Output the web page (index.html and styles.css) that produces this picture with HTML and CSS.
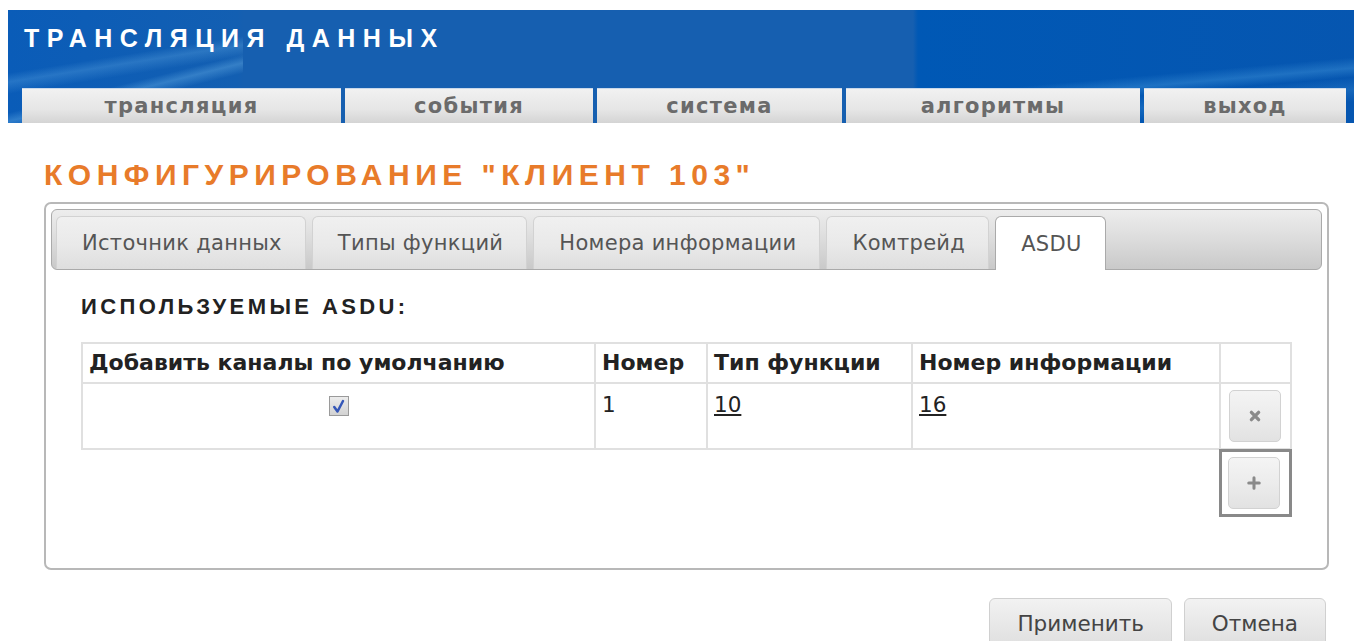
FILE: index.html
```html
<!DOCTYPE html>
<html lang="ru">
<head>
<meta charset="utf-8">
<title>Трансляция данных</title>
<link rel="stylesheet" href="styles.css">
</head>
<body>
<header class="top">
  <h1 class="brand">ТРАНСЛЯЦИЯ ДАННЫХ</h1>
  <nav class="menu">
    <a class="menu-item" href="#">трансляция</a>
    <a class="menu-item" href="#">события</a>
    <a class="menu-item" href="#">система</a>
    <a class="menu-item" href="#">алгоритмы</a>
    <a class="menu-item" href="#">выход</a>
  </nav>
</header>

<main class="page">
  <h2 class="page-title">КОНФИГУРИРОВАНИЕ "КЛИЕНТ 103"</h2>

  <section class="panel">
    <div class="tabs">
      <a class="tab" href="#">Источник данных</a>
      <a class="tab" href="#">Типы функций</a>
      <a class="tab" href="#">Номера информации</a>
      <a class="tab" href="#">Комтрейд</a>
      <a class="tab active" href="#">ASDU</a>
    </div>

    <div class="panel-body">
      <h3 class="section-title">ИСПОЛЬЗУЕМЫЕ ASDU:</h3>
      <table class="grid">
        <colgroup>
          <col class="c-def"><col class="c-num"><col class="c-type"><col class="c-info"><col class="c-act">
        </colgroup>
        <thead>
          <tr>
            <th>Добавить каналы по умолчанию</th>
            <th>Номер</th>
            <th>Тип функции</th>
            <th>Номер информации</th>
            <th></th>
          </tr>
        </thead>
        <tbody>
          <tr>
            <td class="center"><span class="check"><svg viewBox="0 0 12 12" width="15" height="15"><path d="M2.6 6.4 L5.2 10 L9.6 1.6" fill="none" stroke="#3557b8" stroke-width="2" stroke-linecap="round" stroke-linejoin="round"/></svg></span></td>
            <td>1</td>
            <td><a class="link" href="#">10</a></td>
            <td><a class="link" href="#">16</a></td>
            <td class="act"><button class="sq-btn" type="button"><svg viewBox="0 0 10 10" width="12" height="12"><path d="M2 2 L8 8 M8 2 L2 8" stroke="#8a8a8a" stroke-width="2.8" stroke-linecap="round"/></svg></button></td>
          </tr>
        </tbody>
      </table>
      <div class="add-row">
        <div class="focus-ring">
          <button class="sq-btn" type="button"><svg viewBox="0 0 12 12" width="14" height="14"><path d="M6 1.5 V10.5 M1.5 6 H10.5" stroke="#8a8a8a" stroke-width="2.6" stroke-linecap="round"/></svg></button>
        </div>
      </div>
    </div>
  </section>

  <div class="actions">
    <button class="btn" type="button">Применить</button>
    <button class="btn" type="button">Отмена</button>
  </div>
</main>
</body>
</html>
```

FILE: styles.css
```css
html, body {
  margin: 0;
  padding: 0;
  background: #fff;
  overflow: hidden;
}

body {
  font-family: "DejaVu Sans", Verdana, sans-serif;
  color: #333;
}

/* ---------- header ---------- */
.top {
  margin: 10px 0 0 8px;
  height: 113px;
  display: flex;
  flex-direction: column;
  justify-content: space-between;
  background:
    linear-gradient(166deg, transparent 0 60%, rgba(130, 200, 245, 0.3) 65%, transparent 71%) 0 0 / 235px 100% no-repeat,
    linear-gradient(171deg, transparent 0 42%, rgba(120, 190, 240, 0.25) 48%, transparent 56%) 0 0 / 235px 100% no-repeat,
    linear-gradient(175deg, transparent 0 56%, rgba(90, 175, 235, 0.3) 63%, transparent 69%, rgba(90, 175, 235, 0.2) 77%, transparent 85%) 905px 0 / 460px 100% no-repeat,
    linear-gradient(90deg, #0a5cb8 0, #135fb2 230px, #165fb0 235px, #165fb0 905px, #0058b5 910px, #0656b0 1354px);
}

.brand {
  margin: 0;
  padding: 13px 0 0 16px;
  font-family: "Liberation Sans", Arial, sans-serif;
  font-weight: bold;
  font-size: 25px;
  line-height: 30px;
  letter-spacing: 7.5px;
  color: #fff;
}

.menu {
  display: grid;
  grid-template-columns: 319px 248px 245px 294px 202px;
  gap: 4px;
  padding-left: 14px;
}

.menu-item {
  height: 35px;
  display: flex;
  align-items: center;
  justify-content: center;
  background: linear-gradient(#f1f1f1, #e6e6e6 60%, #d4d4d4);
  border-top: 1px solid #c9d8ea;
  box-sizing: border-box;
  font-weight: bold;
  font-size: 21px;
  letter-spacing: 1.3px;
  color: #6b6b6b;
  text-decoration: none;
}

/* ---------- page ---------- */
.page {
  padding: 0 25px 0 44px;
}

.page-title {
  margin: 35px 0 0;
  font-family: "Liberation Sans", Arial, sans-serif;
  font-weight: bold;
  font-size: 30px;
  line-height: 34px;
  letter-spacing: 5.5px;
  color: #e87b2a;
}

.panel {
  margin-top: 10px;
  height: 368px;
  box-sizing: border-box;
  border: 2px solid #b8b8b8;
  border-radius: 7px;
  padding: 5px;
}

.tabs {
  height: 61px;
  box-sizing: border-box;
  border: 1px solid #aaa;
  border-radius: 6px;
  background: linear-gradient(#ededed, #dcdcdc 50%, #c9c9c9);
  display: flex;
  align-items: flex-end;
  gap: 6px;
  padding: 0 4px;
}

.tab {
  height: 53px;
  box-sizing: border-box;
  padding: 0 23px 0 25px;
  display: flex;
  align-items: center;
  border: 1px solid #d2d2d2;
  border-bottom: none;
  border-radius: 6px 6px 0 0;
  background: linear-gradient(#f0f0f0, #e9e9e9 55%, #dedede);
  font-size: 21px;
  letter-spacing: 0.3px;
  color: #555;
  text-decoration: none;
}

.tab.active {
  background: #fff;
  border-color: #aaa;
  height: 54px;
  margin-bottom: -1px;
}

.panel-body {
  padding: 0 31px 0 30px;
}

.section-title {
  margin: 24px 0 0;
  font-family: "Liberation Sans", Arial, sans-serif;
  font-weight: bold;
  font-size: 22px;
  line-height: 26px;
  letter-spacing: 3.4px;
  color: #222;
}

.grid {
  margin-top: 22px;
  width: 1209px;
  border-collapse: collapse;
  table-layout: fixed;
  color: #222;
}

.c-def { width: 513px; }
.c-num { width: 112px; }
.c-type { width: 205px; }
.c-info { width: 308px; }
.c-act { width: 71px; }

.grid th,
.grid td {
  border: 2px solid #e0e0e0;
  text-align: left;
  vertical-align: top;
}

.grid th {
  height: 40px;
  box-sizing: border-box;
  padding: 6px 6px 0;
  font-size: 22px;
  font-weight: bold;
}

.grid td {
  height: 66px;
  box-sizing: border-box;
  padding: 8px 6px 0;
  font-size: 21.5px;
}

.grid td.center {
  text-align: center;
  padding-top: 12px;
}

.grid td.act {
  padding: 6px 0 0 8px;
}

.check {
  display: inline-flex;
  align-items: center;
  justify-content: center;
  width: 20px;
  height: 20px;
  box-sizing: border-box;
  border: 1px solid #9a9a9a;
  background: linear-gradient(#ececec, #d2d2d2);
  vertical-align: top;
}

.link {
  color: #222;
  text-decoration: underline;
}

.sq-btn {
  width: 52px;
  height: 52px;
  padding: 0;
  border: 1px solid #d2d2d2;
  border-radius: 5px;
  background: linear-gradient(#f4f4f4, #ececec 50%, #e2e2e2);
  display: flex;
  align-items: center;
  justify-content: center;
}

.add-row {
  display: flex;
  justify-content: flex-end;
  width: 1211px;
  margin-top: -1px;
}

.focus-ring {
  border: 3px solid #898989;
  padding: 5px 9px 5px 6px;
}

/* ---------- footer buttons ---------- */
.actions {
  margin-top: 28px;
  display: flex;
  justify-content: flex-end;
  gap: 12px;
  padding-right: 3px;
}

.btn {
  height: 52px;
  padding: 0 27px 2px;
  border: 1px solid #d0d0d0;
  border-radius: 6px;
  background: linear-gradient(#f2f2f2, #e8e8e8 50%, #dedede);
  font-family: "DejaVu Sans", Verdana, sans-serif;
  font-size: 21.5px;
  color: #444;
}
```
